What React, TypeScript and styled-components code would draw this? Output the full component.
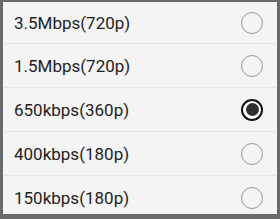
import React from "react";
import styled, { createGlobalStyle } from "styled-components";

const Global = createGlobalStyle`
  html, body { margin: 0; padding: 0; background: #f4f4f4; }
  body { font-family: Roboto, "Noto Sans", sans-serif; }
`;

const Frame = styled.div`
  width: 280px;
  height: 219px;
  box-sizing: border-box;
  border-style: solid;
  border-color: #6a6a6a;
  border-width: 2px 3px 5px 3px;
  background: #f4f4f4;
  overflow: hidden;
  display: flex;
  flex-direction: column;
`;

const Row = styled.div`
  flex: 0 0 auto;
  height: 43px;
  border-bottom: 1px solid #e4e4e4;
  display: flex;
  align-items: center;
  justify-content: space-between;
  padding: 0 14px 0 11px;
  &:first-child { height: 41px; }
  &:last-child { border-bottom: none; }
`;

const Label = styled.span`
  font-size: 17px;
  color: #1e1e1e;
`;

const Radio = styled.span<{ $checked: boolean }>`
  width: 22px;
  height: 22px;
  box-sizing: border-box;
  border-radius: 50%;
  background: ${(p) => (p.$checked ? "#ffffff" : "transparent")};
  border: ${(p) => (p.$checked ? "2px solid #111" : "1.5px solid #9a9a9a")};
  display: flex;
  align-items: center;
  justify-content: center;
  &::after {
    content: "";
    display: ${(p) => (p.$checked ? "block" : "none")};
    width: 13px;
    height: 13px;
    border-radius: 50%;
    background: #2f2f2f;
  }
`;

const options = [
  "3.5Mbps(720p)",
  "1.5Mbps(720p)",
  "650kbps(360p)",
  "400kbps(180p)",
  "150kbps(180p)",
];

export default function App() {
  return (
    <>
      <Global />
      <Frame>
        {options.map((o, i) => (
          <Row key={o}>
            <Label>{o}</Label>
            <Radio $checked={i === 2} />
          </Row>
        ))}
      </Frame>
    </>
  );
}
